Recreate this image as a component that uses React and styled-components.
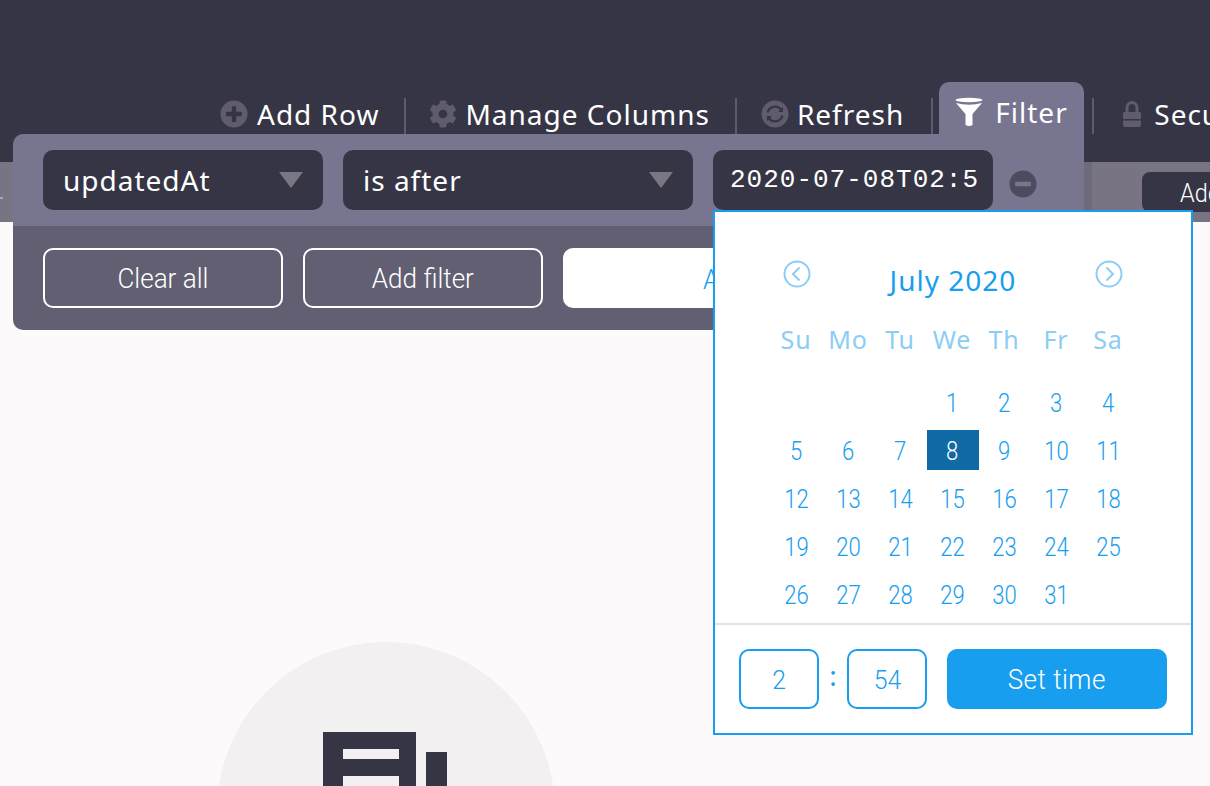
import React from 'react';
import styled, { createGlobalStyle } from 'styled-components';
import { FaPlusCircle, FaCog, FaMinusCircle } from 'react-icons/fa';

const Global = createGlobalStyle`
  html, body { margin: 0; height: 100%; overflow: hidden; background: #fcfafb; }
  * { box-sizing: border-box; }
  #root { height: 100%; }
`;

const narrow = `"Roboto", "Liberation Sans", sans-serif`;
const sans = `"Noto Sans", "Liberation Sans", sans-serif`;
const DARK = '#363545';
const BLUE = '#189eef';

const Page = styled.div`
  position: relative;
  width: 1210px;
  height: 786px;
  overflow: hidden;
`;
const Header = styled.header`
  height: 162px;
  background: ${DARK};
  display: flex;
  align-items: flex-start;
  padding: 82px 0 0 220px;
  overflow: hidden;
`;
const Tool = styled.div`
  display: flex;
  align-items: center;
  flex: none;
  height: 64px;
  gap: ${p => p.$gap ?? 8}px;
  padding: 0 ${p => p.$pr ?? 26}px 0 ${p => p.$pl ?? 0}px;
  font: 400 28px ${sans};
  letter-spacing: 1px;
  color: #fff;
  svg { flex: none; color: #5f5c70; }
`;
const Sep = styled.span`
  flex: none;
  width: 2px;
  height: 36px;
  margin-top: 16px;
  background: #5c5a6b;
`;
const FilterTab = styled.div`
  flex: none;
  display: flex;
  align-items: flex-start;
  gap: 11px;
  width: 145px;
  height: 80px;
  margin: 0 8px 0 6px;
  padding: 11px 0 0 15px;
  border-radius: 10px 10px 0 0;
  background: #787590;
  font: 400 28px ${sans};
  letter-spacing: 1px;
  color: #fff;
  line-height: 38px;
  svg { margin-top: 4px; }
`;
const SubBar = styled.div`
  height: 60px;
  background: linear-gradient(90deg, #787484 0, #787484 1084px, #6d6a7b 1084px, #6d6a7b 1092px, #787484 1092px);
  display: flex;
  justify-content: space-between;
  padding: 10px 0 0 0;
`;
const Tick = styled.span`
  width: 3px;
  height: 2px;
  margin-top: 25px;
  background: #a9a6b4;
`;
const SubButton = styled.div`
  width: 68px;
  height: 40px;
  padding-left: 38px;
  background: ${DARK};
  border-radius: 8px 0 0 8px;
  font: 300 26px/42px ${narrow};
  color: #fff;
  overflow: hidden;
  white-space: nowrap;
`;
const Body = styled.main`
  padding: 420px 0 0 217px;
`;
const Circle = styled.div`
  width: 338px;
  height: 338px;
  border-radius: 50%;
  background: #f2f0f1;
  display: flex;
  justify-content: center;
  padding: 90px 2px 0 0;
`;
const Panel = styled.section`
  position: absolute;
  left: 13px;
  top: 134px;
  width: 1070px;
  border-radius: 10px;
  overflow: hidden;
  z-index: 2;
`;
const PanelTop = styled.div`
  height: 92px;
  padding: 16px 30px;
  background: #787590;
  display: flex;
  gap: 20px;
`;
const Select = styled.div`
  width: ${p => p.$w}px;
  height: 60px;
  padding: 0 20px;
  border-radius: 10px;
  background: ${DARK};
  display: flex;
  align-items: center;
  justify-content: space-between;
  color: #fff;
  font: 400 28px ${sans};
  letter-spacing: 1px;
  overflow: hidden;
  white-space: nowrap;
`;
const MonoValue = styled(Select)`
  font: 400 26px "Liberation Mono", monospace;
  letter-spacing: 1px;
  padding: 0 14px 0 17px;
  justify-content: flex-start;
`;
const ValueClip = styled.span`
  display: block;
  overflow: hidden;
  width: 100%;
`;
const Caret = styled.span`
  width: 0;
  height: 0;
  border-left: 12px solid transparent;
  border-right: 12px solid transparent;
  border-top: 16px solid #787783;
`;
const Remove = styled.span`
  display: flex;
  margin: 20px 0 0 -4px;
  height: 28px;
  color: #4d4b5e;
`;
const PanelBottom = styled.div`
  height: 104px;
  padding: 22px 30px;
  background: #625f73;
  display: flex;
  gap: 20px;
`;
const Squeeze = styled.span`
  display: inline-block;
  white-space: nowrap;
  transform: scaleX(${p => p.$x});
  transform-origin: ${p => p.$origin || 'center'};
`;
const GhostButton = styled.button`
  width: 240px;
  height: 60px;
  border: 2px solid #fff;
  border-radius: 10px;
  background: transparent;
  color: #fff;
  font: 300 28px ${narrow};
  padding-top: 2px;
`;
const ApplyButton = styled.button`
  width: 480px;
  height: 60px;
  border: 0;
  border-radius: 10px;
  background: #fff;
  color: ${BLUE};
  font: 300 28px ${narrow};
  text-align: left;
  padding: 2px 0 0 140px;
`;
const Picker = styled.aside`
  position: absolute;
  left: 713px;
  top: 210px;
  width: 480px;
  height: 525px;
  background: #fff;
  border: 2px solid ${BLUE};
  z-index: 3;
  display: flex;
  flex-direction: column;
`;
const MonthRow = styled.div`
  display: flex;
  align-items: flex-start;
  justify-content: space-between;
  height: 105px;
  padding: 48px 68px 0 68px;
`;
const MonthName = styled.div`
  font: 400 28px/44px ${sans};
  letter-spacing: 1px;
  color: ${BLUE};
  margin-top: -2px;
`;
const NavIcon = styled.svg`
  width: 28px;
  height: 28px;
  fill: none;
  stroke: #8ccdf6;
  stroke-width: 2;
  flex: none;
`;
const Grid = styled.div`
  display: grid;
  grid-template-columns: repeat(7, 52px);
  justify-content: start;
  padding-left: 56px;
`;
const WeekCell = styled.div`
  height: 44px;
  margin-bottom: 21px;
  padding-right: 2px;
  text-align: center;
  font: 400 25px/44px ${sans};
  color: #8ccdf6;
  letter-spacing: 0.8px;
`;
const DayCell = styled.div`
  height: 40px;
  margin-bottom: 8px;
  padding-right: 2px;
  text-align: center;
  font: 300 26px/42px ${narrow};
  color: ${p => (p.$selected ? '#fff' : BLUE)};
  background: ${p => (p.$selected ? '#0f6aa6' : 'transparent')};
`;
const TimeRow = styled.div`
  margin-top: auto;
  border-top: 2px solid #e3e3e3;
  height: 110px;
  padding: 24px 24px 0;
  display: flex;
`;
const TimeBox = styled.div`
  width: 80px;
  height: 60px;
  border: 2px solid ${BLUE};
  border-radius: 10px;
  color: ${BLUE};
  text-align: center;
  font: 300 26px/58px ${narrow};
`;
const Colon = styled.span`
  width: 28px;
  text-align: center;
  font: 400 28px/52px ${sans};
  color: ${BLUE};
`;
const SetTime = styled.button`
  margin-left: 20px;
  width: 220px;
  height: 60px;
  border: 0;
  border-radius: 10px;
  background: ${BLUE};
  color: #fff;
  font: 300 28px ${narrow};
  letter-spacing: 0.5px;
  padding-top: 2px;
`;

const Funnel = () => (
  <svg width="30" height="30" viewBox="0 0 30 30" fill="#fff">
    <ellipse cx="15" cy="3" rx="13.5" ry="2.2" />
    <path d="M2 6 Q15 9.5 28 6 L18.5 17 V28 Q15 30 11.5 28 V17Z" />
  </svg>
);
const Refresh = () => (
  <svg width="28" height="28" viewBox="0 0 28 28">
    <circle cx="14" cy="14" r="13.5" fill="#5f5c70" />
    <g fill="none" stroke="#363545" strokeWidth="2.2">
      <path d="M6.5 12.5a7.8 7.8 0 0 1 13.5-3" />
      <path d="M21.5 15.5a7.8 7.8 0 0 1-13.5 3" />
    </g>
    <path d="M22 7v5h-5zM6 21v-5h5z" fill="#363545" />
  </svg>
);
const Lock = () => (
  <svg width="18" height="28" viewBox="0 0 18 28">
    <path d="M4 13V7.5a5 5 0 0 1 10 0V13" fill="none" stroke="#5f5c70" strokeWidth="3" />
    <path d="M1.5 12H16.5Q18 12 18 13.5V19H0V13.5Q0 12 1.5 12Z M0 20.5H18V25Q18 27 16 27H2Q0 27 0 25Z" fill="#5f5c70" />
  </svg>
);
const TableGlyph = () => (
  <svg width="124" height="60" viewBox="0 0 124 60">
    <path d="M0 0H93V60H0ZM20 17V27H76V17ZM20 44V60H76V44Z" fill="#363545" fillRule="evenodd" />
    <rect x="103" y="20" width="21" height="40" fill="#363545" />
  </svg>
);

const weeks = ['Su', 'Mo', 'Tu', 'We', 'Th', 'Fr', 'Sa'];
const leading = [null, null, null];
const days = Array.from({ length: 31 }, (_, i) => i + 1);

export default function App() {
  return (
    <Page>
      <Global />
      <Header>
        <Tool $gap={9} $pr={25}><FaPlusCircle size={28} />Add Row</Tool>
        <Sep />
        <Tool $pl={23} $pr={25}><FaCog size={28} />Manage Columns</Tool>
        <Sep />
        <Tool $pl={24} $pr={27}><Refresh />Refresh</Tool>
        <Sep />
        <FilterTab><Funnel />Filter</FilterTab>
        <Sep />
        <Tool $pl={29} $gap={13}><Lock />Security Rules</Tool>
      </Header>
      <SubBar><Tick /><SubButton><Squeeze $x={0.9} $origin="left">Add Row</Squeeze></SubButton></SubBar>
      <Body>
        <Circle><TableGlyph /></Circle>
      </Body>
      <Panel>
        <PanelTop>
          <Select $w={280}>updatedAt<Caret /></Select>
          <Select $w={350}>is after<Caret /></Select>
          <MonoValue $w={280}><ValueClip>2020-07-08T02:54:00</ValueClip></MonoValue>
          <Remove><FaMinusCircle size={28} /></Remove>
        </PanelTop>
        <PanelBottom>
          <GhostButton><Squeeze $x={0.93}>Clear all</Squeeze></GhostButton>
          <GhostButton><Squeeze $x={0.93}>Add filter</Squeeze></GhostButton>
          <ApplyButton><Squeeze $x={0.93} $origin="left">Apply all filters</Squeeze></ApplyButton>
        </PanelBottom>
      </Panel>
      <Picker>
        <MonthRow>
          <NavIcon viewBox="0 0 28 28"><circle cx="14" cy="14" r="12.5" /><path d="M16.5 7.5 10 14l6.5 6.5" /></NavIcon>
          <MonthName>July 2020</MonthName>
          <NavIcon viewBox="0 0 28 28"><circle cx="14" cy="14" r="12.5" /><path d="M11.5 7.5 18 14l-6.5 6.5" /></NavIcon>
        </MonthRow>
        <Grid>
          {weeks.map(w => <WeekCell key={w}>{w}</WeekCell>)}
          {leading.map((_, i) => <DayCell key={`x${i}`} />)}
          {days.map(d => (
            <DayCell key={d} $selected={d === 8}><Squeeze $x={0.85}>{d}</Squeeze></DayCell>
          ))}
        </Grid>
        <TimeRow>
          <TimeBox><Squeeze $x={0.95}>2</Squeeze></TimeBox>
          <Colon>:</Colon>
          <TimeBox><Squeeze $x={0.95}>54</Squeeze></TimeBox>
          <SetTime><Squeeze $x={0.93}>Set time</Squeeze></SetTime>
        </TimeRow>
      </Picker>
    </Page>
  );
}
